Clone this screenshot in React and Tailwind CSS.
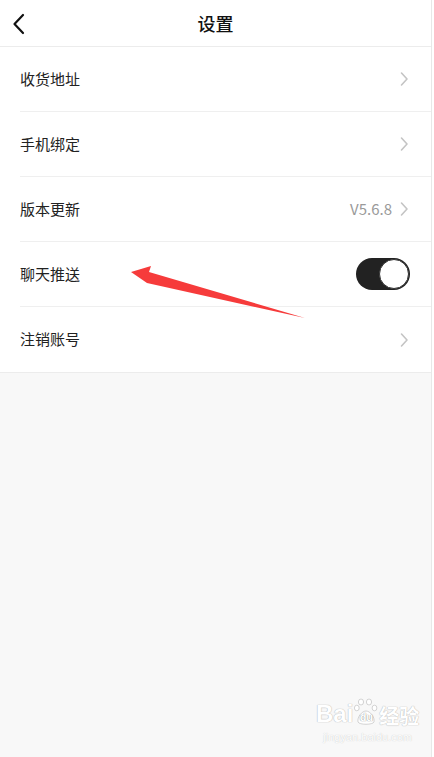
import React from "react";

function Chevron() {
  return (
    <svg width="10" height="16" viewBox="0 0 10 16" className="block">
      <path d="M2.5 2 L8 8 L2.5 14" fill="none" stroke="#c4c4c4" strokeWidth="1.6" strokeLinecap="round" strokeLinejoin="round" />
    </svg>
  );
}

function Row({ label, right, last }) {
  return (
    <div className="flex h-[65px] items-center pl-5">
      <div className={"flex h-full flex-1 items-center pr-[22px] " + (last ? "" : "border-b border-[#efefef]")}>
        <span className="flex-1 text-[15px] text-[#222]">{label}</span>
        {right}
      </div>
    </div>
  );
}

export default function App() {
  return (
    <div
      className="relative flex h-[757px] w-[434px] overflow-hidden bg-white"
      style={{ fontFamily: '"Noto Sans CJK SC", "Noto Sans", sans-serif' }}
    >
      <div className="flex w-[432px] flex-col border-r border-[#e8e8e8] bg-[#f8f8f8]">
        <div className="relative flex h-[47px] items-center justify-center border-b border-[#ececec] bg-white">
          <svg width="14" height="22" viewBox="0 0 14 22" className="absolute left-[12px] top-[13px]">
            <path d="M11 2 L2.5 11 L11 20" fill="none" stroke="#111" strokeWidth="2.2" strokeLinecap="round" strokeLinejoin="round" />
          </svg>
          <span className="text-[18px] font-medium text-[#111]">设置</span>
        </div>
        <div className="flex flex-col border-b border-[#ececec] bg-white">
          <Row label="收货地址" right={<Chevron />} />
          <Row label="手机绑定" right={<Chevron />} />
          <Row
            label="版本更新"
            right={
              <div className="flex items-center gap-[7px]">
                <span className="text-[15px] text-[#9a9a9a]">V5.6.8</span>
                <Chevron />
              </div>
            }
          />
          <Row
            label="聊天推送"
            right={
              <div className="-mr-[1px] flex h-[32px] w-[54px] items-center justify-end rounded-full bg-[#222] pr-[1px]">
                <div className="h-[30px] w-[30px] rounded-full border border-[#333] bg-white" />
              </div>
            }
          />
          <Row label="注销账号" right={<Chevron />} last />
        </div>
        <div className="flex-1" />
      </div>

      <svg width="434" height="757" className="pointer-events-none absolute left-0 top-0">
        <polygon points="131,272 151,266 149,272 305,318 147,283" fill="#f63b3b" />
      </svg>

      <div className="pointer-events-none absolute left-[316px] top-[698px] flex flex-col items-center">
        <div className="flex items-end">
          <span
            className="text-[24px] font-bold leading-none text-white [text-shadow:0_0_1px_#bbb,0_0_1px_#bbb]"
            style={{ fontFamily: '"Liberation Sans", sans-serif' }}
          >
            Bai
          </span>
          <div className="relative mx-[1px] flex h-[28px] w-[24px] items-end justify-center">
            <svg width="24" height="28" viewBox="0 0 24 28" className="absolute left-0 top-0">
              <g fill="#fff" stroke="#c8c8c8" strokeWidth="0.8">
                <ellipse cx="7" cy="4" rx="2.6" ry="3" />
                <ellipse cx="15" cy="4" rx="2.6" ry="3" />
                <ellipse cx="2.8" cy="10" rx="2.4" ry="2.8" />
                <ellipse cx="20.5" cy="10" rx="2.4" ry="2.8" />
                <path d="M4 24 C3 19 8 13 12 13 C16 13 21 19 20 24 C19 27 5 27 4 24 Z" />
              </g>
            </svg>
            <span
              className="relative mb-[3px] text-[11px] font-bold leading-none text-white [text-shadow:0_0_1px_#999,0_0_1px_#999]"
              style={{ fontFamily: '"Liberation Sans", sans-serif' }}
            >
              du
            </span>
          </div>
          <span className="text-[20px] font-bold leading-none text-white [text-shadow:0_0_1px_#bbb,0_0_1px_#bbb]">经验</span>
        </div>
        <span
          className="mt-[6px] text-[11px] leading-none text-white [text-shadow:0_0_1px_#bbb]"
          style={{ fontFamily: '"Liberation Sans", sans-serif' }}
        >
          jingyan.baidu.com
        </span>
      </div>
    </div>
  );
}
